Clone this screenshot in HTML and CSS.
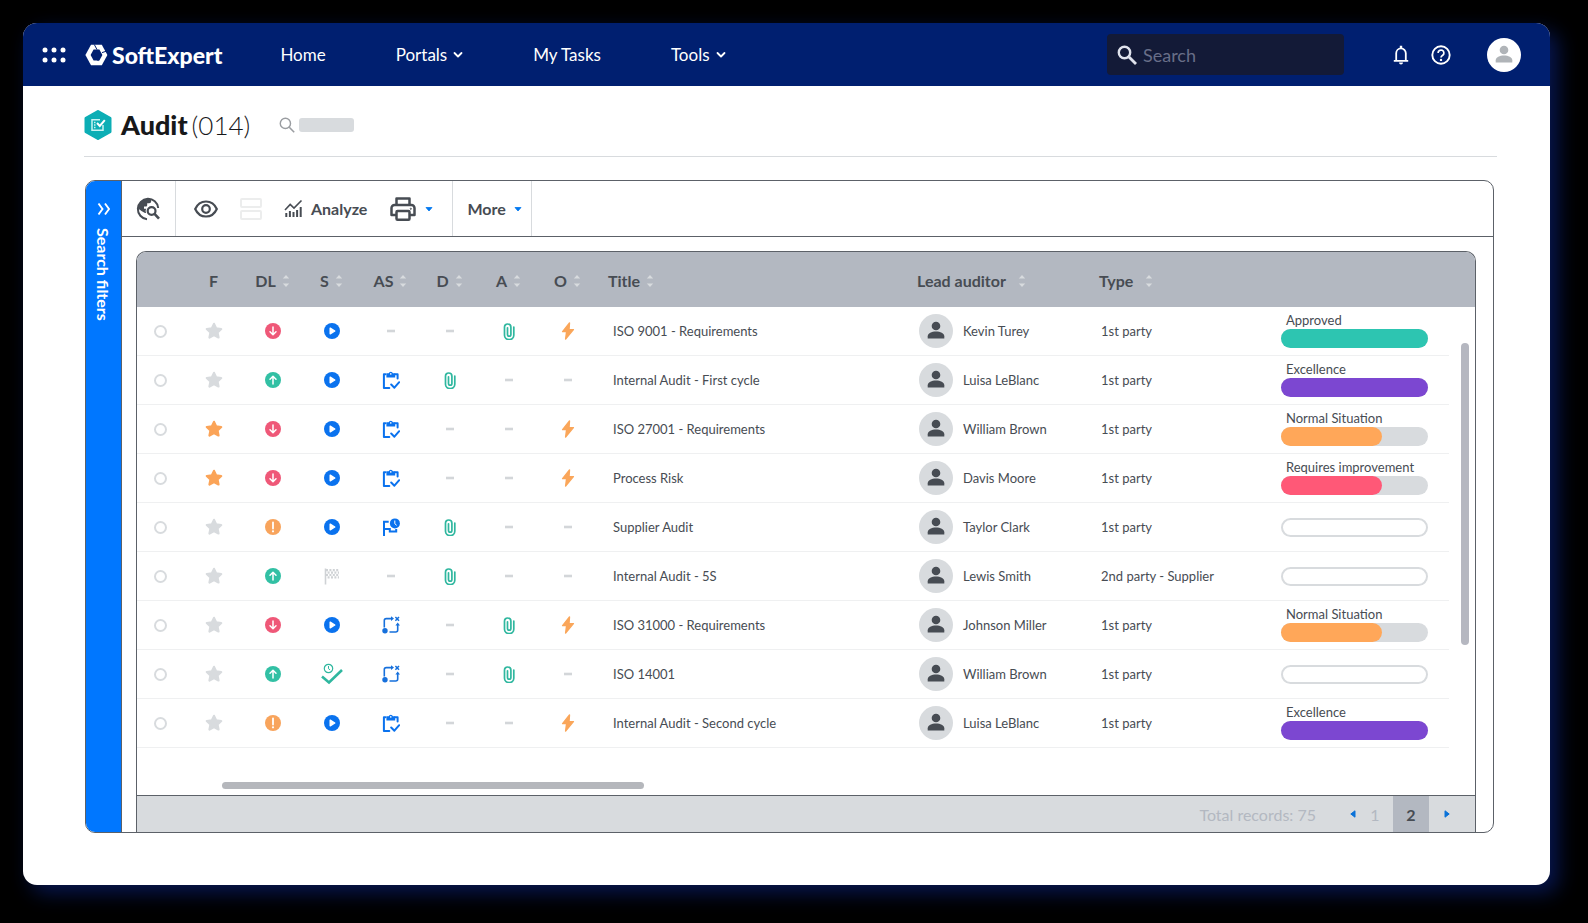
FILE: index.html
```html
<!doctype html>
<html lang="en">
<head>
  <meta charset="utf-8"/>
  <meta name="viewport" content="width=device-width, initial-scale=1"/>
  <title>SoftExpert - Audit</title>
  <link rel="stylesheet" href="styles.css">
</head>
<body>

  <!-- shared icons -->
  <svg class="sprite" aria-hidden="true">
    <symbol id="sort" viewBox="0 0 8 14">
      <path d="M4 1 7.200 4.600H.8zM4 13 .8 9.400h6.400z" fill="#d8dbde"/>
    </symbol>
    <symbol id="chevron" viewBox="0 0 10 8">
      <path d="M1.500 2 5 5.500 8.500 2" fill="none" stroke="currentColor" stroke-width="1.800" stroke-linecap="round" stroke-linejoin="round"/>
    </symbol>
    <symbol id="caret" viewBox="0 0 8 8">
      <path d="M1 2.500h6L4 6z" fill="#0077f0" stroke="#0077f0" stroke-width=".8" stroke-linejoin="round"/>
    </symbol>
    <symbol id="star" viewBox="0 0 24 24">
      <path d="m12 2.500 2.900 6 6.700.9-4.900 4.600 1.300 6.600-6-3.200-6 3.200 1.300-6.600L2.400 9.400l6.700-.9z" fill="currentColor" stroke="currentColor" stroke-width="3" stroke-linejoin="round"/>
    </symbol>
    <symbol id="down" viewBox="0 0 16 16">
      <circle cx="8" cy="8" r="8" fill="#ef5878"/>
      <path d="M8 4v7.500M5 8.700l3 3 3-3" fill="none" stroke="#fff" stroke-width="1.500" stroke-linecap="round" stroke-linejoin="round"/>
    </symbol>
    <symbol id="up" viewBox="0 0 16 16">
      <circle cx="8" cy="8" r="8" fill="#32c0a4"/>
      <path d="M8 12V4.500M5 7.300l3-3 3 3" fill="none" stroke="#fff" stroke-width="1.500" stroke-linecap="round" stroke-linejoin="round"/>
    </symbol>
    <symbol id="warn" viewBox="0 0 16 16">
      <circle cx="8" cy="8" r="8" fill="#f8a45c"/>
      <path d="M8 3.500v6" stroke="#fff" stroke-width="1.800" stroke-linecap="round"/>
      <circle cx="8" cy="12.300" r="1.100" fill="#fff"/>
    </symbol>
    <symbol id="play" viewBox="0 0 16 16">
      <circle cx="8" cy="8" r="8" fill="#0a72ee"/>
      <path d="M6.200 5.200v5.600L10.800 8z" fill="#fff" stroke="#fff" stroke-width="1.400" stroke-linejoin="round"/>
    </symbol>
    <symbol id="dash" viewBox="0 0 10 4">
      <path d="M1 2h8" stroke="#d3d6d9" stroke-width="2.600"/>
    </symbol>
    <symbol id="clip" viewBox="0 0 12 17">
      <path d="M10.800 4v8.300a4.300 3.900 0 0 1-9.300 0V4.200A3.200 3.200 0 0 1 7.900 4.200v7.300a1.700 1.700 0 0 1-3.400 0V4.800" fill="none" stroke="#2fb79f" stroke-width="1.700" stroke-linecap="round"/>
    </symbol>
    <symbol id="bolt" viewBox="0 0 14 18">
      <path d="M8.500 1 1.600 9.600h4L4.600 17 12.400 7.600H8z" fill="#faa65a" stroke="#faa65a" stroke-width="1.400" stroke-linejoin="round"/>
    </symbol>
    <symbol id="task" viewBox="0 0 18 19">
      <path d="M3.500 3.300H1.900v13.800h5.400M13 3.300h2.600V7.500" fill="none" stroke="#0a72ee" stroke-width="2" stroke-linejoin="round" stroke-linecap="round"/>
      <path d="M4.400 2.300h2.300a2.200 2.200 0 0 1 4.200 0h2.300v4.300H4.400z" fill="#0a72ee"/>
      <circle cx="8.800" cy="2.900" r=".8" fill="#fff"/>
      <path d="m9.200 13.500 3.200 3.200 4.800-5.500" fill="none" stroke="#0a72ee" stroke-width="2" stroke-linecap="round" stroke-linejoin="round"/>
    </symbol>
    <symbol id="flag-clock" viewBox="0 0 18 19">
      <path d="M2 18V3.800h4.700M2 11h5.800v2.500h6.400v-2.400" fill="none" stroke="#0a72ee" stroke-width="2"/>
      <circle cx="12.900" cy="5.400" r="5" fill="#0a72ee"/>
      <path d="M12.800 2.500v3.200l1.900 1.600" fill="none" stroke="#fff" stroke-width="1"/>
    </symbol>
    <symbol id="flag-done" viewBox="0 0 16 17">
      <path d="M1.500.5v16" stroke="#cfd2d5" stroke-width="1.600"/>
      <path d="M2 2.200h13M3.600 4.600H15M2 7h13M3.600 9.400H15" stroke="#cfd2d5" stroke-width="2.200" stroke-dasharray="2 1.400"/>
    </symbol>
    <symbol id="route" viewBox="0 0 18 18">
      <path d="M2.300 11.500V4.600a2 2 0 0 1 2-2h5.400M15.700 9v5a2 2 0 0 1-2 2H7.500" fill="none" stroke="#1670dc" stroke-width="1.600"/>
      <path d="m9 .3 3 2.300-3 2.300zM13.400 9.500l2.300-3 2.300 3z" fill="#1670dc"/>
      <path d="m13.400 1 3.600 3.800M17 1l-3.600 3.800" stroke="#1670dc" stroke-width="1.500"/>
      <circle cx="3" cy="14.700" r="2.700" fill="#1670dc"/>
    </symbol>
    <symbol id="check-clock" viewBox="0 0 24 22">
      <path d="m2 13.500 7 6L22 7" fill="none" stroke="#2fb79f" stroke-width="2.600"/>
      <circle cx="8.500" cy="5.500" r="4.200" fill="none" stroke="#2fb79f" stroke-width="1.200"/>
      <path d="M8.500 3v2.700l1.600 1.200" fill="none" stroke="#2fb79f"/>
    </symbol>
    <symbol id="person" viewBox="0 0 34 34">
      <circle cx="17" cy="12" r="4.300"/>
      <path d="M8.700 24.500v-2.200c0-2.800 4-4.800 8.300-4.800s8.300 2 8.300 4.800v2.200z"/>
    </symbol>
    <symbol id="magnifier" viewBox="0 0 20 20">
      <circle cx="7.500" cy="7.500" r="5.700" fill="none" stroke="currentColor" stroke-width="2.400"/>
      <path d="m12 12 7 7" stroke="currentColor" stroke-width="2.800"/>
    </symbol>
    <symbol id="magnifier-thin" viewBox="0 0 20 20">
      <circle cx="8" cy="8" r="6.400" fill="none" stroke="currentColor" stroke-width="1.800"/>
      <path d="m12.800 12.800 6.200 6.200" stroke="currentColor" stroke-width="2"/>
    </symbol>
  </svg>

  <div class="window">

    <header class="topbar">
      <button class="apps" aria-label="Applications">
        <svg width="24" height="16" viewBox="0 0 24 16" fill="#fff">
          <circle cx="3" cy="3" r="2.500"/><circle cx="12" cy="3" r="2.500"/><circle cx="21" cy="3" r="2.500"/>
          <circle cx="3" cy="13" r="2.500"/><circle cx="12" cy="13" r="2.500"/><circle cx="21" cy="13" r="2.500"/>
        </svg>
      </button>
      <a class="brand" href="#">
        <svg width="23" height="22" viewBox="0 0 23 22">
          <path d="M6 .8h10.800l5.600 10.200-5.600 10.200H6L.4 11z" fill="#fff"/>
          <path d="M8.600 5.500h5.800l3 5.500-3 5.500H8.600l-3-5.500z" fill="#001f70"/>
          <path d="M9.300.5 12 5.600M13.600 16.600l-2.400-1.200M21 7.300l-4 1.300" stroke="#001f70"/>
        </svg>
        <span>SoftExpert</span>
      </a>
      <nav class="menu">
        <a href="#">Home</a>
        <button>Portals <svg width="10" height="8"><use href="#chevron"/></svg></button>
        <a href="#">My Tasks</a>
        <button>Tools <svg width="10" height="8"><use href="#chevron"/></svg></button>
      </nav>
      <label class="search">
        <svg width="20" height="20"><use href="#magnifier"/></svg>
        <input type="text" placeholder="Search" aria-label="Search">
      </label>
      <button class="bell" aria-label="Notifications">
        <svg width="16" height="20" viewBox="0 0 16 20">
          <path d="M3.200 15.500V8.300a4.800 5 0 0 1 9.600 0v7.200M.8 15.800h14.400" fill="none" stroke="#fff" stroke-width="1.800"/>
          <path d="M6.800.8h2.400v2.400H6.800zM6 17.500h4a2 2 0 0 1-4 0z" fill="#fff"/>
        </svg>
      </button>
      <button class="help" aria-label="Help">
        <svg width="20" height="20" viewBox="0 0 20 20">
          <circle cx="10" cy="10" r="8.700" fill="none" stroke="#fff" stroke-width="1.900"/>
          <path d="M7.100 8a2.900 2.900 0 1 1 4.600 2.300c-1 .7-1.700 1.200-1.700 2.300" fill="none" stroke="#fff" stroke-width="1.700"/>
          <circle cx="10" cy="14.900" r="1.200" fill="#fff"/>
        </svg>
      </button>
      <button class="account" aria-label="Account">
        <svg width="34" height="34" fill="#b0b4b8"><use href="#person"/></svg>
      </button>
    </header>

    <main>
      <div class="title-row">
        <svg width="28" height="30" viewBox="0 0 28 30">
          <path d="M14 1.500 26 8.300v13.400L14 28.500 2 21.700V8.300z" fill="#0caeb5" stroke="#0caeb5" stroke-width="3" stroke-linejoin="round"/>
          <path d="M16 9.700H8v10.600h11V15M10 12.500h1.500M10 15h1.500M10 17.500h1.500" fill="none" stroke="#c9f3f2" stroke-width="1.500"/>
          <path d="m13 13 2.800 3 5-5.800" fill="none" stroke="#fff" stroke-width="2"/>
        </svg>
        <h1>Audit <span>(014)</span></h1>
        <svg class="title-search" width="16" height="16"><use href="#magnifier-thin"/></svg>
        <span class="placeholder-pill"></span>
      </div>

      <div class="panel">
        <button class="filters">
          <svg width="14" height="14" viewBox="0 0 14 14">
            <path d="m1.500 1.500 4 5.500-4 5.500M8 1.500 12 7l-4 5.500" fill="none" stroke="#fff" stroke-width="1.900"/>
          </svg>
          <span>Search filters</span>
        </button>

        <div class="content">
          <div class="toolbar">
            <div class="group">
              <button aria-label="Explore">
                <svg width="24" height="24" viewBox="0 0 24 24">
                  <path d="M11 22.200A10.200 10.200 0 1 1 22.200 11" fill="none" stroke="#474c53" stroke-width="2"/>
                  <path d="M2 11.500C2 6 6.500 1.800 11.500 1.800c1.300 0 2.700.3 3.700.8v1.600a2 2 0 0 1-2 2h-2v2a1.200 1.200 0 0 1-1.200 1.200H8v2.300h3V16H9l-3.500-2z" fill="#474c53"/>
                  <circle cx="15.600" cy="14" r="6" fill="#fff"/>
                  <circle cx="15.600" cy="14" r="3.900" fill="none" stroke="#474c53" stroke-width="2.200"/>
                  <path d="m18.300 16.700 4.700 5" stroke="#474c53" stroke-width="2.600"/>
                </svg>
              </button>
            </div>
            <div class="group wide">
              <button aria-label="View">
                <svg width="24" height="18" viewBox="0 0 24 18" fill="none" stroke="#474c53" stroke-width="2.200">
                  <path d="M1.200 9C3.300 4.300 7.300 1.500 12 1.500S20.700 4.300 22.800 9C20.700 13.700 16.700 16.500 12 16.500S3.300 13.700 1.200 9z"/>
                  <circle cx="12" cy="9" r="3.800"/>
                </svg>
              </button>
              <button aria-label="Layout" disabled>
                <svg width="22" height="24" viewBox="0 0 22 24" fill="none" stroke="#eceded" stroke-width="2">
                  <rect x="1" y="2" width="20" height="8" rx="1"/>
                  <rect x="1" y="14" width="20" height="8" rx="1"/>
                </svg>
              </button>
              <button>
                <svg width="19" height="19" viewBox="0 0 19 19" fill="none" stroke="#474c53" stroke-width="2">
                  <path d="M2.300 18v-4M5.900 18v-6M9.500 18v-5M13.100 18v-7M16.700 18V8"/>
                  <path d="m1 11 5.200-5.500 3.800 3.600 7.500-7.600" stroke-width="1.600"/>
                </svg>
                Analyze
              </button>
              <button aria-label="Print">
                <svg width="28" height="26" viewBox="0 0 28 26" fill="none" stroke="#474c53" stroke-width="2.500" stroke-linejoin="round">
                  <path d="M7.500 9V2.500h13V9M7.500 19h-5v-7a3 3 0 0 1 3-3h17a3 3 0 0 1 3 3v7h-5"/>
                  <rect x="7.500" y="15" width="13" height="8.700" rx="1"/>
                  <circle cx="21.800" cy="12.800" r=".6" stroke-width="1"/>
                </svg>
                <svg width="8" height="8"><use href="#caret"/></svg>
              </button>
            </div>
            <div class="group">
              <button>More <svg width="8" height="8"><use href="#caret"/></svg></button>
            </div>
          </div>

          <div class="grid">
            <table>
              <colgroup>
                <col class="c-pick"><col class="c-icon"><col class="c-icon"><col class="c-icon"><col class="c-icon">
                <col class="c-icon"><col class="c-icon"><col class="c-icon"><col class="c-title"><col class="c-auditor">
                <col class="c-type"><col class="c-status"><col class="c-gutter">
              </colgroup>
              <thead>
                <tr>
                  <th></th>
                  <th>F</th>
                  <th><button>DL <svg width="8" height="14"><use href="#sort"/></svg></button></th>
                  <th><button>S <svg width="8" height="14"><use href="#sort"/></svg></button></th>
                  <th><button>AS <svg width="8" height="14"><use href="#sort"/></svg></button></th>
                  <th><button>D <svg width="8" height="14"><use href="#sort"/></svg></button></th>
                  <th><button>A <svg width="8" height="14"><use href="#sort"/></svg></button></th>
                  <th><button>O <svg width="8" height="14"><use href="#sort"/></svg></button></th>
                  <th class="text"><button>Title <svg width="8" height="14"><use href="#sort"/></svg></button></th>
                  <th class="text spaced"><button>Lead auditor <svg width="8" height="14"><use href="#sort"/></svg></button></th>
                  <th class="text spaced"><button>Type <svg width="8" height="14"><use href="#sort"/></svg></button></th>
                  <th></th>
                  <th></th>
                </tr>
              </thead>
              <tbody>
                <tr>
                  <td><input type="radio" name="record" aria-label="ISO 9001 - Requirements"></td>
                  <td><svg class="star" width="18" height="18"><use href="#star"/></svg></td>
                  <td><svg width="16" height="16"><use href="#down"/></svg></td>
                  <td><svg width="16" height="16"><use href="#play"/></svg></td>
                  <td><svg width="10" height="4"><use href="#dash"/></svg></td>
                  <td><svg width="10" height="4"><use href="#dash"/></svg></td>
                  <td><svg width="12" height="17"><use href="#clip"/></svg></td>
                  <td><svg width="14" height="18"><use href="#bolt"/></svg></td>
                  <td class="title">ISO 9001 - Requirements</td>
                  <td class="text"><div class="auditor"><svg class="avatar" width="34" height="34"><use href="#person"/></svg>Kevin Turey</div></td>
                  <td class="text">1st party</td>
                  <td class="text"><div class="status"><span>Approved</span><div class="bar"><div class="approved" style="width: 100%"></div></div></div></td>
                  <td class="gutter" rowspan="9"><div class="thumb-y"></div></td>
                </tr>
                <tr>
                  <td><input type="radio" name="record" aria-label="Internal Audit - First cycle"></td>
                  <td><svg class="star" width="18" height="18"><use href="#star"/></svg></td>
                  <td><svg width="16" height="16"><use href="#up"/></svg></td>
                  <td><svg width="16" height="16"><use href="#play"/></svg></td>
                  <td><svg width="18" height="19"><use href="#task"/></svg></td>
                  <td><svg width="12" height="17"><use href="#clip"/></svg></td>
                  <td><svg width="10" height="4"><use href="#dash"/></svg></td>
                  <td><svg width="10" height="4"><use href="#dash"/></svg></td>
                  <td class="title">Internal Audit - First cycle</td>
                  <td class="text"><div class="auditor"><svg class="avatar" width="34" height="34"><use href="#person"/></svg>Luisa LeBlanc</div></td>
                  <td class="text">1st party</td>
                  <td class="text"><div class="status"><span>Excellence</span><div class="bar"><div class="excellence" style="width: 100%"></div></div></div></td>
                </tr>
                <tr>
                  <td><input type="radio" name="record" aria-label="ISO 27001 - Requirements"></td>
                  <td><svg class="star on" width="18" height="18"><use href="#star"/></svg></td>
                  <td><svg width="16" height="16"><use href="#down"/></svg></td>
                  <td><svg width="16" height="16"><use href="#play"/></svg></td>
                  <td><svg width="18" height="19"><use href="#task"/></svg></td>
                  <td><svg width="10" height="4"><use href="#dash"/></svg></td>
                  <td><svg width="10" height="4"><use href="#dash"/></svg></td>
                  <td><svg width="14" height="18"><use href="#bolt"/></svg></td>
                  <td class="title">ISO 27001 - Requirements</td>
                  <td class="text"><div class="auditor"><svg class="avatar" width="34" height="34"><use href="#person"/></svg>William Brown</div></td>
                  <td class="text">1st party</td>
                  <td class="text"><div class="status"><span>Normal Situation</span><div class="bar"><div class="normal" style="width: 69%"></div></div></div></td>
                </tr>
                <tr>
                  <td><input type="radio" name="record" aria-label="Process Risk"></td>
                  <td><svg class="star on" width="18" height="18"><use href="#star"/></svg></td>
                  <td><svg width="16" height="16"><use href="#down"/></svg></td>
                  <td><svg width="16" height="16"><use href="#play"/></svg></td>
                  <td><svg width="18" height="19"><use href="#task"/></svg></td>
                  <td><svg width="10" height="4"><use href="#dash"/></svg></td>
                  <td><svg width="10" height="4"><use href="#dash"/></svg></td>
                  <td><svg width="14" height="18"><use href="#bolt"/></svg></td>
                  <td class="title">Process Risk</td>
                  <td class="text"><div class="auditor"><svg class="avatar" width="34" height="34"><use href="#person"/></svg>Davis Moore</div></td>
                  <td class="text">1st party</td>
                  <td class="text"><div class="status"><span>Requires improvement</span><div class="bar"><div class="improve" style="width: 69%"></div></div></div></td>
                </tr>
                <tr>
                  <td><input type="radio" name="record" aria-label="Supplier Audit"></td>
                  <td><svg class="star" width="18" height="18"><use href="#star"/></svg></td>
                  <td><svg width="16" height="16"><use href="#warn"/></svg></td>
                  <td><svg width="16" height="16"><use href="#play"/></svg></td>
                  <td><svg width="18" height="19"><use href="#flag-clock"/></svg></td>
                  <td><svg width="12" height="17"><use href="#clip"/></svg></td>
                  <td><svg width="10" height="4"><use href="#dash"/></svg></td>
                  <td><svg width="10" height="4"><use href="#dash"/></svg></td>
                  <td class="title">Supplier Audit</td>
                  <td class="text"><div class="auditor"><svg class="avatar" width="34" height="34"><use href="#person"/></svg>Taylor Clark</div></td>
                  <td class="text">1st party</td>
                  <td class="text"><div class="bar empty"></div></td>
                </tr>
                <tr>
                  <td><input type="radio" name="record" aria-label="Internal Audit - 5S"></td>
                  <td><svg class="star" width="18" height="18"><use href="#star"/></svg></td>
                  <td><svg width="16" height="16"><use href="#up"/></svg></td>
                  <td><svg width="16" height="17"><use href="#flag-done"/></svg></td>
                  <td><svg width="10" height="4"><use href="#dash"/></svg></td>
                  <td><svg width="12" height="17"><use href="#clip"/></svg></td>
                  <td><svg width="10" height="4"><use href="#dash"/></svg></td>
                  <td><svg width="10" height="4"><use href="#dash"/></svg></td>
                  <td class="title">Internal Audit - 5S</td>
                  <td class="text"><div class="auditor"><svg class="avatar" width="34" height="34"><use href="#person"/></svg>Lewis Smith</div></td>
                  <td class="text">2nd party - Supplier</td>
                  <td class="text"><div class="bar empty"></div></td>
                </tr>
                <tr>
                  <td><input type="radio" name="record" aria-label="ISO 31000 - Requirements"></td>
                  <td><svg class="star" width="18" height="18"><use href="#star"/></svg></td>
                  <td><svg width="16" height="16"><use href="#down"/></svg></td>
                  <td><svg width="16" height="16"><use href="#play"/></svg></td>
                  <td><svg width="18" height="18"><use href="#route"/></svg></td>
                  <td><svg width="10" height="4"><use href="#dash"/></svg></td>
                  <td><svg width="12" height="17"><use href="#clip"/></svg></td>
                  <td><svg width="14" height="18"><use href="#bolt"/></svg></td>
                  <td class="title">ISO 31000 - Requirements</td>
                  <td class="text"><div class="auditor"><svg class="avatar" width="34" height="34"><use href="#person"/></svg>Johnson Miller</div></td>
                  <td class="text">1st party</td>
                  <td class="text"><div class="status"><span>Normal Situation</span><div class="bar"><div class="normal" style="width: 69%"></div></div></div></td>
                </tr>
                <tr>
                  <td><input type="radio" name="record" aria-label="ISO 14001"></td>
                  <td><svg class="star" width="18" height="18"><use href="#star"/></svg></td>
                  <td><svg width="16" height="16"><use href="#up"/></svg></td>
                  <td><svg width="24" height="22"><use href="#check-clock"/></svg></td>
                  <td><svg width="18" height="18"><use href="#route"/></svg></td>
                  <td><svg width="10" height="4"><use href="#dash"/></svg></td>
                  <td><svg width="12" height="17"><use href="#clip"/></svg></td>
                  <td><svg width="10" height="4"><use href="#dash"/></svg></td>
                  <td class="title">ISO 14001</td>
                  <td class="text"><div class="auditor"><svg class="avatar" width="34" height="34"><use href="#person"/></svg>William Brown</div></td>
                  <td class="text">1st party</td>
                  <td class="text"><div class="bar empty"></div></td>
                </tr>
                <tr>
                  <td><input type="radio" name="record" aria-label="Internal Audit - Second cycle"></td>
                  <td><svg class="star" width="18" height="18"><use href="#star"/></svg></td>
                  <td><svg width="16" height="16"><use href="#warn"/></svg></td>
                  <td><svg width="16" height="16"><use href="#play"/></svg></td>
                  <td><svg width="18" height="19"><use href="#task"/></svg></td>
                  <td><svg width="10" height="4"><use href="#dash"/></svg></td>
                  <td><svg width="10" height="4"><use href="#dash"/></svg></td>
                  <td><svg width="14" height="18"><use href="#bolt"/></svg></td>
                  <td class="title">Internal Audit - Second cycle</td>
                  <td class="text"><div class="auditor"><svg class="avatar" width="34" height="34"><use href="#person"/></svg>Luisa LeBlanc</div></td>
                  <td class="text">1st party</td>
                  <td class="text"><div class="status"><span>Excellence</span><div class="bar"><div class="excellence" style="width: 100%"></div></div></div></td>
                </tr>
              </tbody>
            </table>

            <div class="scroll-x"><div class="thumb-x"></div></div>

            <footer class="pager">
              <span class="total">Total records: 75</span>
              <button class="prev" aria-label="Previous page"><svg width="6" height="8" viewBox="0 0 6 8"><path d="M5 .8v6.400L.8 4z" fill="#0a72d8" stroke="#0a72d8" stroke-linejoin="round"/></svg></button>
              <button>1</button>
              <button class="current">2</button>
              <button aria-label="Next page"><svg width="6" height="8" viewBox="0 0 6 8"><path d="M1 .8v6.400L5.200 4z" fill="#0a72d8" stroke="#0a72d8" stroke-linejoin="round"/></svg></button>
            </footer>
          </div>
        </div>
      </div>
    </main>
  </div>

</body>
</html>
```

FILE: styles.css
```css
:root {
  --navy: #001f70;
  --blue: #0077ff;
  --ink: #474c53;
  --line: #5c6168;
  --steel: #b3b8c1;
  --soft: #d8dbde;
}
* { box-sizing: border-box; }
body {
  min-height: 100vh;
  margin: 0;
  padding: 23px 38px 38px 23px;
  background: #000;
  color: var(--ink);
  font-family: Lato, sans-serif;
  font-size: 13px;
}
a { color: inherit; text-decoration: none; }
button { padding: 0; border: 0; background: none; color: inherit; font: inherit; cursor: pointer; }
svg { display: block; flex: none; }
.sprite { position: absolute; width: 0; height: 0; }

.window {
  overflow: hidden;
  border-radius: 14px;
  background: #fff;
  box-shadow: 8px 8px 20px #071650;
}

/* top bar */
.topbar {
  display: flex; align-items: center;
  height: 63px;
  padding: 0 29px 0 19px;
  background: var(--navy);
  color: #fff;
}
.brand { display: flex; align-items: center; gap: 4px; margin-left: 19px; font-size: 23px; font-weight: 900; }
.menu { display: flex; flex: 1; gap: 70px; margin-left: 58px; font-size: 17px; }
.menu button { display: flex; align-items: center; gap: 6px; }
.search {
  display: flex; align-items: center; gap: 6px;
  width: 237px; height: 41px;
  padding-left: 10px;
  border-radius: 4px;
  background: #131a37;
  color: #dfe2ec;
}
.search input { flex: 1; min-width: 0; padding: 0; border: 0; outline: 0; background: none; color: #fff; font: inherit; font-size: 18px; }
.search input::placeholder { color: #686e88; opacity: 1; }
.bell { margin-left: 49px; }
.help { margin-left: 22px; }
.account { margin-left: 36px; border-radius: 50%; background: #fff; }

/* page title */
main { padding: 0 53px 52px 61px; }
.title-row { display: flex; align-items: center; height: 71px; padding-top: 7px; border-bottom: 1px solid var(--soft); }
h1 { display: flex; align-items: baseline; gap: 4px; margin: 0 0 0 9px; color: #17181a; font-size: 27px; font-weight: 900; }
h1 span { font-size: 26px; font-weight: 300; }
.title-search { margin-left: 29px; color: #9a9da1; }
.placeholder-pill { width: 55px; height: 14px; margin-left: 4px; border-radius: 3px; background: var(--soft); }

/* panel */
.panel {
  display: flex; overflow: hidden;
  margin: 23px 3px 0 1px;
  border: 1px solid var(--line);
  border-radius: 10px;
}
.filters {
  display: flex; flex-direction: column; align-items: center; gap: 12px;
  width: 36px;
  padding-top: 21px;
  border-right: 1px solid var(--line);
  background: var(--blue);
  color: #fff;
  font-size: 16px; font-weight: 700;
}
.filters span { writing-mode: vertical-rl; }
.content { flex: 1; min-width: 0; }

.toolbar { display: flex; height: 56px; border-bottom: 1px solid var(--line); font-size: 16px; font-weight: 700; }
.group { display: flex; align-items: center; gap: 22px; padding: 0 9px 0 14px; border-right: 1px solid var(--soft); }
.group:first-child { padding-right: 15px; }
.group.wide { padding: 0 19px 0 18px; }
.group button { display: flex; align-items: center; gap: 8px; }

/* records */
.grid { margin: 14px 17px 0 14px; border: 1px solid var(--line); border-bottom: 0; border-radius: 10px 10px 0 0; overflow: hidden; }
table { width: 100%; border-spacing: 0; table-layout: fixed; }
.c-pick { width: 47px; }
.c-icon { width: 59px; }
.c-auditor { width: 182px; }
.c-type { width: 180px; }
.c-status { width: 181px; }
.c-gutter { width: 26px; }
th { height: 55px; padding: 2px 0 0; background: var(--steel); font-size: 16px; font-weight: 700; }
th button { display: flex; align-items: center; gap: 6px; margin: 0 auto; }
th.text button { margin: 0 0 0 11px; }
th.spaced button { gap: 12px; }
td { height: 49px; padding: 0; border-bottom: 1px solid #eff0f1; }
td > svg { margin: 0 auto; }
td.title { padding-left: 16px; }
td.text { padding-left: 13px; }
td.gutter { border: 0; vertical-align: top; }
input[type=radio] {
  display: block; appearance: none;
  width: 13px; height: 13px;
  margin: 0 auto;
  border: 2px solid var(--soft);
  border-radius: 50%;
}
input[type=radio]:checked { border-color: var(--blue); }
.star { color: var(--soft); }
.star.on { color: #fba458; }
.auditor { display: flex; align-items: center; gap: 10px; }
.avatar { border-radius: 50%; background: var(--soft); fill: var(--ink); }
.status { padding-bottom: 3px; }
.status span { display: block; padding-left: 5px; line-height: 18px; }
.bar { width: 147px; height: 19px; border-radius: 10px; background: var(--soft); }
.bar div { height: 100%; border-radius: 10px; }
.bar.empty { border: 2px solid var(--soft); background: #fff; }
.approved { background: #2dc5b1; }
.excellence { background: #7c47d1; }
.normal { background: #ffa759; }
.improve { background: #ff5877; }
.thumb-y { width: 8px; height: 302px; margin: 36px 0 0 12px; border-radius: 4px; background: #b5b7c0; }
.scroll-x { height: 47px; padding: 34px 0 0 85px; }
.thumb-x { width: 422px; height: 7px; border-radius: 4px; background: #b5b7bc; }

.pager {
  display: flex; align-items: stretch; justify-content: flex-end;
  height: 37px;
  padding-right: 10px;
  border-top: 1px solid var(--line);
  background: var(--soft);
  color: var(--steel);
  font-size: 16px;
}
.total { align-self: center; margin-right: 33px; }
.pager button { display: flex; align-items: center; justify-content: center; width: 36px; }
.pager .prev { width: 8px; }
.pager .current { background: var(--steel); color: var(--ink); font-weight: 700; }
```
